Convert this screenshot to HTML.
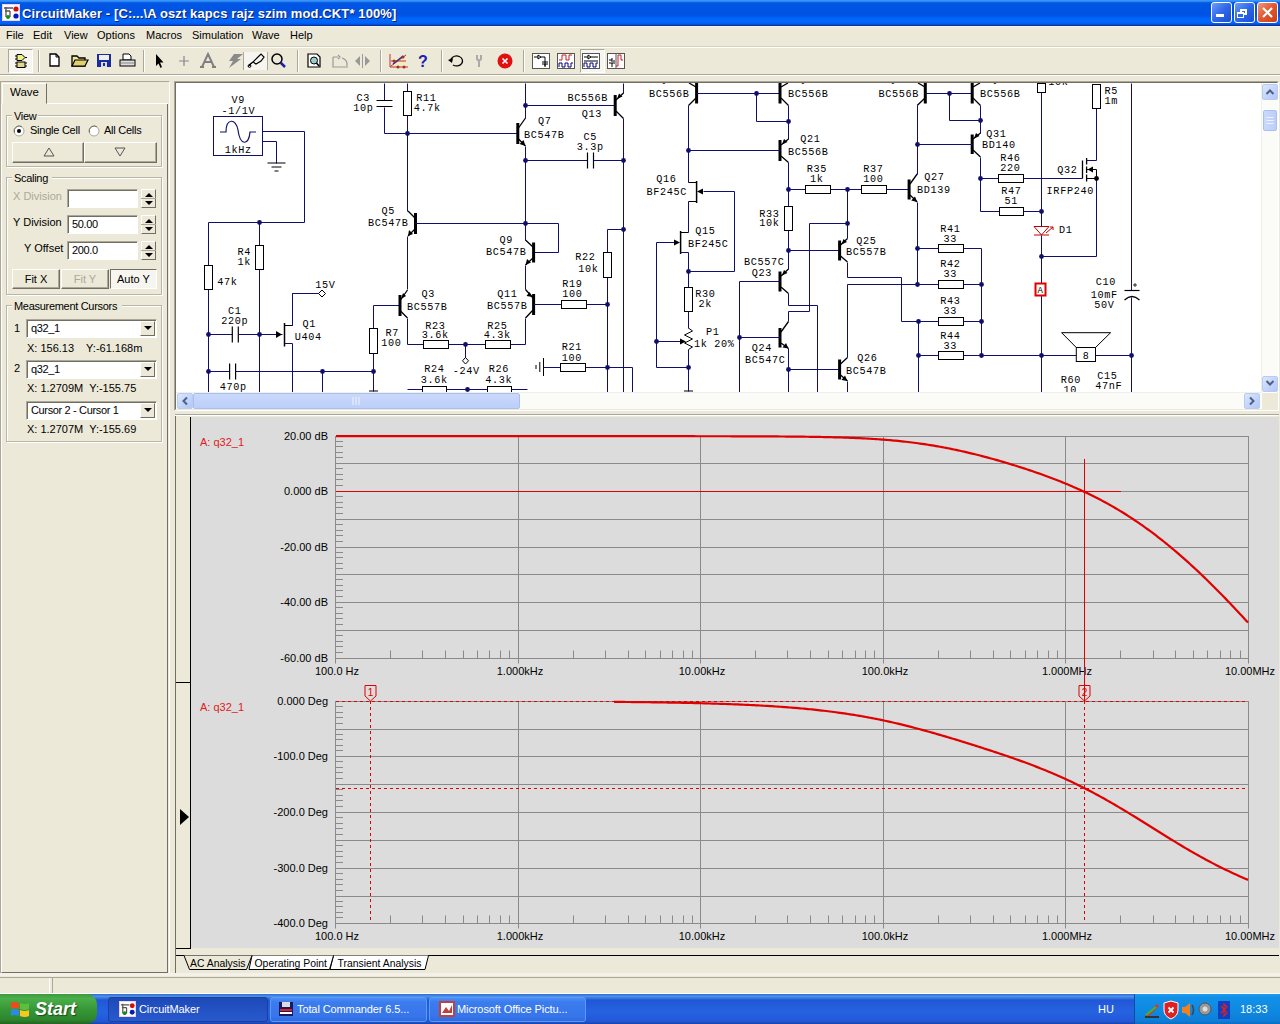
<!DOCTYPE html><html><head><meta charset="utf-8"><style>
*{margin:0;padding:0;box-sizing:border-box}
html,body{width:1280px;height:1024px;overflow:hidden;background:#ECE9D8;font-family:"Liberation Sans",sans-serif;font-size:11px;color:#000}
.a{position:absolute}
.t{position:absolute;white-space:pre;line-height:1}
</style></head><body><div class="a" style="left:0px;top:0px;width:1280px;height:26px;background:linear-gradient(#3D9DFF 0px,#2A84F4 1.5px,#0A60E0 2.5px,#0055E5 4px,#0053E2 15px,#005CF4 17px,#0068F5 19px,#0066FF 21px,#0064FC 23px,#0050D0 24.5px,#0A30A0 25.5px)"></div>
<svg class="a" style="left:2px;top:4px" width="18" height="17" viewBox="0 0 18 17">
<rect x="0" y="0" width="18" height="17" fill="#f4d0f4"/>
<rect x="1" y="1" width="16" height="15" fill="#fff"/>
<path d="M2 4H11M4 3V13M3 7H8M8 7V13" stroke="#555" stroke-width="1.3" fill="none"/>
<circle cx="14" cy="5" r="2.6" fill="#d01010"/><circle cx="14" cy="12" r="2.6" fill="#0020b0"/><circle cx="6" cy="13" r="2" fill="#109010"/>
</svg>
<div class="t" style="left:22px;top:7px;color:#fff;font-weight:bold;font-size:13px;letter-spacing:0.11px;text-shadow:1px 1px 0 #0a1e6e">CircuitMaker - [C:...\A oszt kapcs rajz szim mod.CKT* 100%]</div>
<div class="a" style="left:1211px;top:2px;width:21px;height:21px;background:linear-gradient(135deg,#6E9CF8,#2E67E8 50%,#1A4FD0);border:1px solid #fff;border-radius:3px"></div>
<div class="a" style="left:1234px;top:2px;width:21px;height:21px;background:linear-gradient(135deg,#6E9CF8,#2E67E8 50%,#1A4FD0);border:1px solid #fff;border-radius:3px"></div>
<div class="a" style="left:1257px;top:2px;width:21px;height:21px;background:linear-gradient(135deg,#F09878,#E0562E 50%,#C8401C);border:1px solid #fff;border-radius:3px"></div>
<div class="a" style="left:1216px;top:14px;width:8px;height:3px;background:#fff"></div>
<div class="a" style="left:1240px;top:9px;width:7px;height:6px;border:2px solid #fff;border-top-width:2px"></div>
<div class="a" style="left:1237px;top:12px;width:7px;height:6px;border:1px solid #fff;border-top:2px solid #fff;background:#2E67E8"></div>
<svg class="a" style="left:1261px;top:6px" width="13" height="13"><path d="M2 2L11 11M11 2L2 11" stroke="#fff" stroke-width="2.2"/></svg>
<div class="a" style="left:0px;top:26px;width:1280px;height:20px;background:#ECE9D8;border-top:1px solid #F2F2F4"></div>
<div class="t" style="left:6px;top:30px;font-size:11px">File</div>
<div class="t" style="left:33px;top:30px;font-size:11px">Edit</div>
<div class="t" style="left:64px;top:30px;font-size:11px">View</div>
<div class="t" style="left:97px;top:30px;font-size:11px">Options</div>
<div class="t" style="left:146px;top:30px;font-size:11px">Macros</div>
<div class="t" style="left:192px;top:30px;font-size:11px">Simulation</div>
<div class="t" style="left:252px;top:30px;font-size:11px">Wave</div>
<div class="t" style="left:290px;top:30px;font-size:11px">Help</div>
<div class="a" style="left:0px;top:46px;width:1280px;height:1px;background:#D8D2BD"></div>
<div class="a" style="left:0px;top:47px;width:1280px;height:1px;background:#fff"></div>
<div class="a" style="left:0px;top:48px;width:1280px;height:26px;background:#ECE9D8"></div>
<div class="a" style="left:0px;top:74px;width:1280px;height:1px;background:#ACA899"></div>
<div class="a" style="left:0px;top:75px;width:1280px;height:1px;background:#fff"></div>
<div class="a" style="left:0px;top:76px;width:1280px;height:918px;background:#ECE9D8"></div>
<div class="a" style="left:8px;top:49px;width:25px;height:24px;background:#F6F5EF;border:1px solid;border-color:#ACA899 #fff #fff #ACA899"></div>
<svg class="a" style="left:13px;top:53px" width="16" height="16" viewBox="0 0 16 16">
<path d="M2 3H4M2 6H4M12 4.5H14" stroke="#000"/><path d="M4 1.5H9L12 4.5L9 7.5H4Z" fill="#f0f080" stroke="#000"/>
<path d="M2 10H4M2 13H4M12 10H14M12 13H14" stroke="#000"/><rect x="4" y="9" width="8" height="5.5" fill="#e0d890" stroke="#000"/>
</svg>
<div class="a" style="left:38px;top:50px;width:1px;height:22px;background:#ACA899"></div>
<div class="a" style="left:39px;top:50px;width:1px;height:22px;background:#fff"></div>
<div class="a" style="left:143px;top:50px;width:1px;height:22px;background:#ACA899"></div>
<div class="a" style="left:144px;top:50px;width:1px;height:22px;background:#fff"></div>
<svg class="a" style="left:48px;top:52px" width="90" height="18" viewBox="0 0 90 18">
<path d="M2 2H8L11 5V14H2Z" fill="#fff" stroke="#000" stroke-width="1.3"/><path d="M8 2V5H11" fill="none" stroke="#000"/>
<path d="M24 4H29L31 6H37V14H24Z" fill="#f0e890" stroke="#000" stroke-width="1.3"/><path d="M24 14L27 8H40L37 14Z" fill="#e0d070" stroke="#000" stroke-width="1.2"/>
<rect x="49" y="2" width="14" height="13" fill="#1a2aa0"/><rect x="51" y="3" width="10" height="5" fill="#eee"/><rect x="53" y="10" width="6" height="5" fill="#ddd"/><rect x="55" y="11" width="2" height="3" fill="#1a2aa0"/>
<path d="M75 2H81L83 4V8H75Z" fill="#fff" stroke="#000"/><rect x="72" y="8" width="15" height="6" fill="#ddd" stroke="#000"/><path d="M73 11H86" stroke="#888"/>
</svg>
<svg class="a" style="left:150px;top:52px" width="140" height="18" viewBox="0 0 140 18">
<path d="M6 2V14L8.5 11.5L10.5 16L12 15L10 10.5H13.5Z" fill="#000"/>
<path d="M34 4V14M29 9H39" stroke="#888" stroke-width="1.2"/>
<path d="M52 15L58 2L64 15M55 10H61M50 15H54M62 15H66" stroke="#808080" stroke-width="2" fill="none"/>
<path d="M84 2H93L87 7H91L79 16L83 9H79Z" fill="#8a8a8a"/>
<rect x="93.5" y="-3.5" width="24" height="23" fill="#F6F5EF" stroke="#ACA899"/>
<path d="M99 13L103 10M103 10L108 5L111 2L114 5L111 9L106 12Z" fill="none" stroke="#000" stroke-width="1.2"/><circle cx="99.5" cy="14" r="1.4" fill="none" stroke="#000"/><path d="M98 15L103 10" stroke="#000"/>
<circle cx="127" cy="7" r="5" fill="none" stroke="#000" stroke-width="1.5"/><path d="M130.5 10.5L135 15" stroke="#2020a0" stroke-width="2.5"/>
</svg>
<div class="a" style="left:297px;top:50px;width:1px;height:22px;background:#ACA899"></div>
<div class="a" style="left:298px;top:50px;width:1px;height:22px;background:#fff"></div>
<svg class="a" style="left:305px;top:52px" width="75" height="18" viewBox="0 0 75 18">
<path d="M3 2H12L15 5V15H3Z" fill="#fff" stroke="#000" stroke-width="1.2"/><circle cx="9" cy="8.5" r="3.5" fill="#9cc" stroke="#000"/><path d="M11.5 11L14 14" stroke="#000" stroke-width="1.5"/>
<path d="M28 5V15H43M28 5H33M33 3L35 5L33 7M37 6Q43 8 42 14" stroke="#999" fill="none" stroke-width="1.2"/>
<path d="M50 9L55 4V14Z" fill="#999"/><path d="M65 9L60 4V14Z" fill="#999"/><path d="M57.5 2V16" stroke="#999"/>
</svg>
<div class="a" style="left:380px;top:50px;width:1px;height:22px;background:#ACA899"></div>
<div class="a" style="left:381px;top:50px;width:1px;height:22px;background:#fff"></div>
<svg class="a" style="left:388px;top:52px" width="50" height="18" viewBox="0 0 50 18">
<rect x="4" y="6" width="14" height="9" fill="#f4f0b0" opacity="0.6"/>
<path d="M2 2V15H20M3 14L18 3M3 9L18 9M3 15" stroke="#c03030" stroke-width="1" fill="none"/>
<path d="M5 12L15 4" stroke="#3030a0" stroke-width="1.5"/>
<circle cx="6" cy="9" r="1.5" fill="#a03030"/><circle cx="15" cy="5" r="1.5" fill="#a03030"/><circle cx="10" cy="15" r="1.5" fill="#a03030"/><circle cx="16" cy="15" r="1.5" fill="#a03030"/>
<text x="30" y="15" font-family="Liberation Sans" font-weight="bold" font-size="16" fill="#1a20b0">?</text>
</svg>
<div class="a" style="left:441px;top:50px;width:1px;height:22px;background:#ACA899"></div>
<div class="a" style="left:442px;top:50px;width:1px;height:22px;background:#fff"></div>
<svg class="a" style="left:446px;top:52px" width="70" height="18" viewBox="0 0 70 18">
<path d="M5 7A6 5 0 1 1 7 13" fill="none" stroke="#000" stroke-width="1.3"/><path d="M2 8L7 6L6 11Z" fill="#000"/>
<path d="M31 3V7L33 9L35 7V3M33 9V15" stroke="#aaa" stroke-width="2" fill="none"/>
<circle cx="59" cy="9" r="7.5" fill="#e01010"/><path d="M56.5 6.5L61.5 11.5M61.5 6.5L56.5 11.5" stroke="#fff" stroke-width="1.6"/>
</svg>
<div class="a" style="left:523px;top:50px;width:1px;height:22px;background:#ACA899"></div>
<div class="a" style="left:524px;top:50px;width:1px;height:22px;background:#fff"></div>
<div class="a" style="left:580px;top:49px;width:25px;height:24px;background:#F6F5EF;border:1px solid;border-color:#ACA899 #fff #fff #ACA899"></div>
<svg class="a" style="left:531px;top:52px" width="100" height="18" viewBox="0 0 100 18">
<rect x="1.5" y="1.5" width="17" height="15" fill="#fff" stroke="#555"/><path d="M3 5H7M7 3V7L10 5Z M10 5H14V14M11 10H17M11 12H17M14 12V15" stroke="#000" fill="none"/>
<rect x="26.5" y="1.5" width="17" height="15" fill="#fff" stroke="#555"/><path d="M28 8H31V3H35V8H38V3H41" stroke="#c02020" fill="none"/><path d="M28 15V11H31V15H34V11H37V15H40V11H42" stroke="#000080" fill="none"/>
<rect x="51.5" y="1.5" width="17" height="15" fill="#fff" stroke="#555"/><path d="M53 5H57M57 3V7L60 5Z M60 5H67M53 9H67" stroke="#000" fill="none"/><path d="M53 15V11H56V15H59V11H62V15H65V11H67" stroke="#000080" fill="none"/>
<rect x="76.5" y="1.5" width="17" height="15" fill="#fff" stroke="#555"/><path d="M78 8H81M81 6V10M82 9H84M78 11H84M81 11V15" stroke="#000" fill="none"/><path d="M85 14H87V3H90V8H92" stroke="#c02020" fill="none"/><path d="M85 2V16" stroke="#555"/>
</svg>
<div class="a" style="left:0px;top:76px;width:175px;height:903px;background:#ECE9D8"></div>
<div class="a" style="left:0px;top:81px;width:170px;height:895px;border:1px solid;border-color:#ACA899 #fff #fff #ACA899"></div>
<div class="a" style="left:1px;top:103px;width:167px;height:870px;border:1px solid;border-color:#fff #716F64 #716F64 #fff;border-top-color:transparent"></div>
<div class="a" style="left:47px;top:103px;width:121px;height:1px;background:#fff"></div>
<div class="a" style="left:2px;top:83px;width:45px;height:21px;background:#ECE9D8;border:1px solid;border-color:#fff #716F64 transparent #fff"></div>
<div class="t" style="left:10px;top:87px;font-size:11.5px">Wave</div>
<div class="a" style="left:6px;top:115px;width:156px;height:52px;border:1px solid #B8B6A6;box-shadow:inset 1px 1px 0 #fff, 1px 1px 0 #fff"></div>
<div class="a" style="left:12px;top:109px;width:26px;height:12px;background:#ECE9D8"></div>
<div class="t" style="left:14px;top:111px;font-size:11px;letter-spacing:-0.3px">View</div>
<svg class="a" style="left:13px;top:125px" width="160" height="12"><circle cx="6" cy="6" r="5" fill="#fff" stroke="#ACA899"/><path d="M1.5 7.5A5 5 0 0 1 9 1.8" stroke="#716F64" fill="none"/><circle cx="6" cy="6" r="2" fill="#000"/><circle cx="81" cy="6" r="5" fill="#fff" stroke="#ACA899"/><path d="M76.5 7.5A5 5 0 0 1 84 1.8" stroke="#716F64" fill="none"/></svg>
<div class="t" style="left:30px;top:125px;font-size:11px;letter-spacing:-0.25px">Single Cell</div>
<div class="t" style="left:104px;top:125px;font-size:11px;letter-spacing:-0.25px">All Cells</div>
<div class="a" style="left:12px;top:142px;width:72px;height:21px;background:#ECE9D8;border:1px solid;border-color:#fff #716F64 #716F64 #fff;box-shadow:inset -1px -1px 0 #ACA899;"></div>
<div class="a" style="left:84px;top:142px;width:73px;height:21px;background:#ECE9D8;border:1px solid;border-color:#fff #716F64 #716F64 #fff;box-shadow:inset -1px -1px 0 #ACA899;"></div>
<svg class="a" style="left:40px;top:146px" width="100" height="12"><path d="M4 10L9 2L14 10Z" fill="none" stroke="#555"/><path d="M75 2L80 10L85 2Z" fill="none" stroke="#555"/></svg>
<div class="a" style="left:6px;top:177px;width:156px;height:118px;border:1px solid #B8B6A6;box-shadow:inset 1px 1px 0 #fff, 1px 1px 0 #fff"></div>
<div class="a" style="left:12px;top:171px;width:40px;height:12px;background:#ECE9D8"></div>
<div class="t" style="left:14px;top:173px;font-size:11px;letter-spacing:-0.3px">Scaling</div>
<div class="t" style="left:13px;top:191px;color:#ACA899;font-size:11px">X Division</div>
<div class="t" style="left:13px;top:217px;font-size:11px">Y Division</div>
<div class="t" style="left:24px;top:243px;font-size:11px">Y Offset</div>
<div class="a" style="left:67px;top:189px;width:71px;height:19px;background:#fff;border:1px solid;border-color:#ACA899 #fff #fff #ACA899;box-shadow:inset 1px 1px 0 #716F64"></div>
<div class="a" style="left:141px;top:189px;width:15px;height:19px;background:#ECE9D8;border:1px solid;border-color:#fff #716F64 #716F64 #fff"></div>
<div class="a" style="left:141px;top:198px;width:15px;height:1px;background:#ACA899"></div>
<svg class="a" style="left:144px;top:191px" width="10" height="16"><path d="M1 6L5 2L9 6Z M1 10L9 10L5 14Z" fill="#000"/></svg>
<div class="a" style="left:67px;top:215px;width:71px;height:19px;background:#fff;border:1px solid;border-color:#ACA899 #fff #fff #ACA899;box-shadow:inset 1px 1px 0 #716F64"></div>
<div class="t" style="left:72px;top:219px;font-size:11px;letter-spacing:-0.35px">50.00</div>
<div class="a" style="left:141px;top:215px;width:15px;height:19px;background:#ECE9D8;border:1px solid;border-color:#fff #716F64 #716F64 #fff"></div>
<div class="a" style="left:141px;top:224px;width:15px;height:1px;background:#ACA899"></div>
<svg class="a" style="left:144px;top:217px" width="10" height="16"><path d="M1 6L5 2L9 6Z M1 10L9 10L5 14Z" fill="#000"/></svg>
<div class="a" style="left:67px;top:241px;width:71px;height:19px;background:#fff;border:1px solid;border-color:#ACA899 #fff #fff #ACA899;box-shadow:inset 1px 1px 0 #716F64"></div>
<div class="t" style="left:72px;top:245px;font-size:11px;letter-spacing:-0.35px">200.0</div>
<div class="a" style="left:141px;top:241px;width:15px;height:19px;background:#ECE9D8;border:1px solid;border-color:#fff #716F64 #716F64 #fff"></div>
<div class="a" style="left:141px;top:250px;width:15px;height:1px;background:#ACA899"></div>
<svg class="a" style="left:144px;top:243px" width="10" height="16"><path d="M1 6L5 2L9 6Z M1 10L9 10L5 14Z" fill="#000"/></svg>
<div class="a" style="left:12px;top:269px;width:48px;height:20px;background:#ECE9D8;border:1px solid;border-color:#fff #716F64 #716F64 #fff;box-shadow:inset -1px -1px 0 #ACA899;"></div>
<div class="t" style="left:12px;top:269px;width:48px;height:20px;display:flex;align-items:center;justify-content:center;">Fit X</div>
<div class="a" style="left:61px;top:269px;width:48px;height:20px;background:#ECE9D8;border:1px solid;border-color:#fff #716F64 #716F64 #fff;box-shadow:inset -1px -1px 0 #ACA899;"></div>
<div class="t" style="left:61px;top:269px;width:48px;height:20px;display:flex;align-items:center;justify-content:center;color:#ACA899">Fit Y</div>
<div class="a" style="left:110px;top:269px;width:47px;height:20px;background:#F6F5EF;border:1px solid;border-color:#716F64 #fff #fff #716F64"></div>
<div class="t" style="left:117px;top:274px;font-size:11px">Auto Y</div>
<div class="a" style="left:6px;top:305px;width:156px;height:137px;border:1px solid #B8B6A6;box-shadow:inset 1px 1px 0 #fff, 1px 1px 0 #fff"></div>
<div class="a" style="left:12px;top:299px;width:110px;height:12px;background:#ECE9D8"></div>
<div class="t" style="left:14px;top:301px;font-size:11px;letter-spacing:-0.3px">Measurement Cursors</div>
<div class="t" style="left:14px;top:323px;font-size:11px">1</div>
<div class="t" style="left:14px;top:363px;font-size:11px">2</div>
<div class="a" style="left:26px;top:319px;width:131px;height:19px;background:#fff;border:1px solid;border-color:#ACA899 #fff #fff #ACA899;box-shadow:inset 1px 1px 0 #716F64"></div>
<div class="t" style="left:31px;top:323px;font-size:11px;letter-spacing:-0.35px">q32_1</div>
<div class="a" style="left:140px;top:321px;width:15px;height:15px;background:#ECE9D8;border:1px solid;border-color:#fff #716F64 #716F64 #fff"></div>
<svg class="a" style="left:144px;top:326px" width="8" height="5"><path d="M0 0H8L4 4Z" fill="#000"/></svg>
<div class="a" style="left:26px;top:360px;width:131px;height:19px;background:#fff;border:1px solid;border-color:#ACA899 #fff #fff #ACA899;box-shadow:inset 1px 1px 0 #716F64"></div>
<div class="t" style="left:31px;top:364px;font-size:11px;letter-spacing:-0.35px">q32_1</div>
<div class="a" style="left:140px;top:362px;width:15px;height:15px;background:#ECE9D8;border:1px solid;border-color:#fff #716F64 #716F64 #fff"></div>
<svg class="a" style="left:144px;top:367px" width="8" height="5"><path d="M0 0H8L4 4Z" fill="#000"/></svg>
<div class="a" style="left:26px;top:401px;width:131px;height:19px;background:#fff;border:1px solid;border-color:#ACA899 #fff #fff #ACA899;box-shadow:inset 1px 1px 0 #716F64"></div>
<div class="t" style="left:31px;top:405px;font-size:11px;letter-spacing:-0.35px">Cursor 2 - Cursor 1</div>
<div class="a" style="left:140px;top:403px;width:15px;height:15px;background:#ECE9D8;border:1px solid;border-color:#fff #716F64 #716F64 #fff"></div>
<svg class="a" style="left:144px;top:408px" width="8" height="5"><path d="M0 0H8L4 4Z" fill="#000"/></svg>
<div class="t" style="left:27px;top:343px;font-size:11px">X: 156.13    Y:-61.168m</div>
<div class="t" style="left:27px;top:383px;font-size:11px">X: 1.2709M  Y:-155.75</div>
<div class="t" style="left:27px;top:424px;font-size:11px">X: 1.2707M  Y:-155.69</div>
<div class="a" style="left:174px;top:81px;width:1105px;height:330px;border:1px solid;border-color:#ACA899 #fff #fff #ACA899"></div>
<div class="a" style="left:175px;top:82px;width:1103px;height:328px;background:#fff;border:1px solid;border-color:#716F64 #ECE9D8 #ECE9D8 #716F64"></div>
<svg class="a" style="left:0;top:0" width="1280" height="1024" viewBox="0 0 1280 1024"><defs><clipPath id="sc"><rect x="176" y="83" width="1085" height="309"/></clipPath></defs><g clip-path="url(#sc)" font-family="Liberation Mono" font-size="10.2" letter-spacing="0.65" fill="#000"><rect x="213.5" y="116.5" width="49" height="39" fill="none" stroke="#10106a"/><path d="M220 132H226C226 118 236 118 238 130C240 146 249 146 250 132H256" stroke="#10106a" fill="none" stroke-width="1.2"/><text x="238.3" y="102.5" text-anchor="middle">V9</text><text x="238.3" y="113.5" text-anchor="middle">-1/1V</text><text x="238.3" y="152.5" text-anchor="middle">1kHz</text><path d="M262.5 131.5 L304.5 131.5 L304.5 222.5 L208.5 222.5 L208.5 392.5" stroke="#10106a" fill="none"/><circle cx="259.5" cy="222.5" r="2.4" fill="#10106a"/><path d="M262.5 141.5 L276.5 141.5 L276.5 163.5" stroke="#10106a" fill="none"/><path d="M267.5 163H285.5M271.5 167H281.5M274.5 171H278.5" stroke="#000"/><path d="M384.5 83.5 L384.5 100.5" stroke="#10106a" fill="none"/><path d="M376.5 100.5H392.5M376.5 106.5H392.5" stroke="#000" stroke-width="1.2"/><path d="M384.5 107.5 L384.5 133.5 L517.5 133.5" stroke="#10106a" fill="none"/><text x="363.3" y="100.5" text-anchor="middle">C3</text><text x="363.3" y="110.5" text-anchor="middle">10p</text><path d="M407.5 83.5 L407.5 91.5" stroke="#10106a" fill="none"/><rect x="403.5" y="91.5" width="8" height="24.0" fill="#fff" stroke="#000"/><path d="M407.5 115.5 L407.5 211.5" stroke="#10106a" fill="none"/><text x="426.3" y="100.5" text-anchor="middle">R11</text><text x="427.3" y="110.5" text-anchor="middle">4.7k</text><circle cx="407.5" cy="133.5" r="2.4" fill="#10106a"/><path d="M259.5 222.5 L259.5 245.5" stroke="#10106a" fill="none"/><rect x="255.5" y="245.5" width="8" height="24.0" fill="#fff" stroke="#000"/><path d="M259.5 269.5 L259.5 392.5" stroke="#10106a" fill="none"/><text x="244.3" y="254.5" text-anchor="middle">R4</text><text x="244.3" y="264.5" text-anchor="middle">1k</text><rect x="204.5" y="265.5" width="8" height="24.0" fill="#fff" stroke="#000"/><text x="227.3" y="284.5" text-anchor="middle">47k</text><path d="M208.5 334.5 L232.5 334.5" stroke="#10106a" fill="none"/><path d="M232.3 326.5V342.5M238.3 326.5V342.5" stroke="#000" stroke-width="1.2"/><path d="M238.5 334.5 L282.5 334.5" stroke="#10106a" fill="none"/><text x="234.8" y="313.5" text-anchor="middle">C1</text><text x="234.8" y="323.5" text-anchor="middle">220p</text><circle cx="208.5" cy="334.5" r="2.4" fill="#10106a"/><circle cx="259.5" cy="334.5" r="2.4" fill="#10106a"/><path d="M282 334.5L276 331V338Z" fill="#000"/><path d="M284.5 323V346.5" stroke="#000" stroke-width="1.5"/><path d="M284.5 325.5 L292.5 325.5 L292.5 293.5 L320.5 293.5" stroke="#000" fill="none"/><path d="M292.5 325.5V300" stroke="#10106a"/><path d="M292.5 300V293.5H320" stroke="#10106a" fill="none"/><path d="M322 290L325.5 293.5L322 297L318.5 293.5Z" fill="#fff" stroke="#000"/><path d="M284.5 343.5 L292.5 343.5 L292.5 392.5" stroke="#10106a" fill="none"/><text x="325.3" y="287.5" text-anchor="middle">15V</text><text x="309.3" y="326.5" text-anchor="middle">Q1</text><text x="308.3" y="339.5" text-anchor="middle">U404</text><path d="M208.5 371.5 L229.5 371.5" stroke="#10106a" fill="none"/><path d="M229.6 363.5V379.5M235.6 363.5V379.5" stroke="#000" stroke-width="1.2"/><path d="M235.5 371.5 L373.5 371.5" stroke="#10106a" fill="none"/><text x="233.3" y="389.5" text-anchor="middle">470p</text><circle cx="208.5" cy="371.5" r="2.4" fill="#10106a"/><circle cx="322.5" cy="371.5" r="2.4" fill="#10106a"/><circle cx="373.5" cy="371.5" r="2.4" fill="#10106a"/><path d="M322.5 371.5 L322.5 392.5" stroke="#10106a" fill="none"/><path d="M373.5 305.5 L373.5 328.5" stroke="#10106a" fill="none"/><rect x="369.5" y="328.5" width="8" height="25.0" fill="#fff" stroke="#000"/><path d="M373.5 353.5 L373.5 391.5" stroke="#10106a" fill="none"/><path d="M369 391H378" stroke="#000"/><path d="M373.5 305.5 L400.5 305.5" stroke="#10106a" fill="none"/><text x="392.3" y="335.5" text-anchor="middle">R7</text><text x="391.3" y="345.5" text-anchor="middle">100</text><path d="M415.5 213V234" stroke="#000" stroke-width="3"/><path d="M415 218L408 211M415 229L408 236" stroke="#000" stroke-width="1.3"/><path d="M408 236L409 230L413 234Z" fill="#000"/><path d="M415.5 223.5 L558.5 223.5 L558.5 252.5 L533.5 252.5" stroke="#10106a" fill="none"/><text x="388.3" y="213.5" text-anchor="middle">Q5</text><text x="388.3" y="225.5" text-anchor="middle">BC547B</text><path d="M407.5 236.5 L407.5 289.5" stroke="#10106a" fill="none"/><path d="M400 295V316" stroke="#000" stroke-width="3"/><path d="M400.5 300L407.5 290M400.5 311L407.5 318" stroke="#000" stroke-width="1.3"/><path d="M401 299L403 293L406 296Z" fill="#000"/><path d="M407.5 318.5 L407.5 344.5 L423.5 344.5" stroke="#10106a" fill="none"/><text x="428.3" y="296.5" text-anchor="middle">Q3</text><text x="427.3" y="309.5" text-anchor="middle">BC557B</text><rect x="423.5" y="340.5" width="25.0" height="8" fill="#fff" stroke="#000"/><path d="M448.5 344.5 L485.5 344.5" stroke="#10106a" fill="none"/><rect x="485.5" y="340.5" width="25.0" height="8" fill="#fff" stroke="#000"/><path d="M510.5 344.5 L525.5 344.5 L525.5 318.5" stroke="#10106a" fill="none"/><text x="435.3" y="328.5" text-anchor="middle">R23</text><text x="435.3" y="338.0" text-anchor="middle">3.6k</text><text x="497.3" y="328.5" text-anchor="middle">R25</text><text x="497.3" y="338.0" text-anchor="middle">4.3k</text><circle cx="465.5" cy="344.5" r="2.4" fill="#10106a"/><path d="M465.5 344.5 L465.5 358.5" stroke="#10106a" fill="none"/><path d="M465.5 357.5L468.5 360.8L465.5 364L462.5 360.8Z" fill="#fff" stroke="#000"/><text x="466.3" y="374.0" text-anchor="middle">-24V</text><text x="434.3" y="372.0" text-anchor="middle">R24</text><text x="434.3" y="382.5" text-anchor="middle">3.6k</text><text x="498.8" y="372.0" text-anchor="middle">R26</text><text x="498.8" y="382.5" text-anchor="middle">4.3k</text><path d="M407.5 389.5 L422.5 389.5" stroke="#10106a" fill="none"/><rect x="422.5" y="386.5" width="24.0" height="8" fill="#fff" stroke="#000"/><path d="M446.5 389.5 L487.5 389.5" stroke="#10106a" fill="none"/><rect x="487.5" y="386.5" width="24.0" height="8" fill="#fff" stroke="#000"/><path d="M511.5 389.5 L527.5 389.5" stroke="#10106a" fill="none"/><circle cx="467.5" cy="389.5" r="2.4" fill="#10106a"/><path d="M517.8 123V144" stroke="#000" stroke-width="3"/><path d="M518.5 128L525.5 118M518.5 139L525.5 146" stroke="#000" stroke-width="1.3"/><path d="M525.5 146L519.5 144L523.5 140Z" fill="#000"/><path d="M525.5 83.5 L525.5 118.5" stroke="#10106a" fill="none"/><path d="M525.5 146.5 L525.5 240.5" stroke="#10106a" fill="none"/><path d="M525.5 265.5 L525.5 289.5" stroke="#10106a" fill="none"/><circle cx="525.5" cy="105.5" r="2.4" fill="#10106a"/><circle cx="525.5" cy="160.5" r="2.4" fill="#10106a"/><circle cx="525.5" cy="223.5" r="2.4" fill="#10106a"/><text x="544.8" y="124.0" text-anchor="middle">Q7</text><text x="544.3" y="137.5" text-anchor="middle">BC547B</text><path d="M525.5 105.5 L615.5 105.5" stroke="#10106a" fill="none"/><path d="M525.5 160.5 L587.5 160.5" stroke="#10106a" fill="none"/><path d="M587.5 152.5V168.5M593.5 152.5V168.5" stroke="#000" stroke-width="1.2"/><path d="M593.5 160.5 L623.5 160.5" stroke="#10106a" fill="none"/><text x="590.3" y="139.5" text-anchor="middle">C5</text><text x="590.3" y="149.5" text-anchor="middle">3.3p</text><circle cx="623.5" cy="160.5" r="2.4" fill="#10106a"/><path d="M615.2 95V116" stroke="#000" stroke-width="3"/><path d="M616 100L623.5 93M616 111L623.5 118.5" stroke="#000" stroke-width="1.3"/><path d="M617 99L619 93.5L622.5 96.5Z" fill="#000"/><path d="M623.5 83.5 L623.5 93.5" stroke="#10106a" fill="none"/><path d="M623.5 118.5 L623.5 392.5" stroke="#10106a" fill="none"/><text x="587.8" y="100.5" text-anchor="middle">BC556B</text><text x="591.8" y="116.5" text-anchor="middle">Q13</text><circle cx="623.5" cy="229.5" r="2.4" fill="#10106a"/><path d="M623.5 229.5 L607.5 229.5 L607.5 392.5" stroke="#10106a" fill="none"/><path d="M533.6 242.5V262.5" stroke="#000" stroke-width="3"/><path d="M533 247L525.5 240M533 258L525.5 265" stroke="#000" stroke-width="1.3"/><path d="M525.5 265L527 259L531 262.5Z" fill="#000"/><text x="506.3" y="242.5" text-anchor="middle">Q9</text><text x="506.3" y="254.5" text-anchor="middle">BC547B</text><path d="M533.6 294V315" stroke="#000" stroke-width="3"/><path d="M533 298L525.5 289.5M533 310L525.5 318" stroke="#000" stroke-width="1.3"/><path d="M532.5 297L526.5 296L529.5 292Z" fill="#000"/><text x="507.3" y="297.0" text-anchor="middle">Q11</text><text x="507.3" y="308.5" text-anchor="middle">BC557B</text><path d="M533.5 304.5 L561.5 304.5" stroke="#10106a" fill="none"/><rect x="561.5" y="300.5" width="25.0" height="8" fill="#fff" stroke="#000"/><path d="M586.5 304.5 L607.5 304.5" stroke="#10106a" fill="none"/><circle cx="607.5" cy="304.5" r="2.4" fill="#10106a"/><text x="572.3" y="287.0" text-anchor="middle">R19</text><text x="572.3" y="297.0" text-anchor="middle">100</text><rect x="603.5" y="252.5" width="8" height="25.0" fill="#fff" stroke="#000"/><text x="585.3" y="259.5" text-anchor="middle">R22</text><text x="588.3" y="271.5" text-anchor="middle">10k</text><path d="M543.5 358V376M539.8 362V372M536 365V369" stroke="#000"/><path d="M543.5 367.5 L560.5 367.5" stroke="#10106a" fill="none"/><rect x="560.5" y="363.5" width="25.0" height="8" fill="#fff" stroke="#000"/><path d="M585.5 367.5 L632.5 367.5 L632.5 392.5" stroke="#10106a" fill="none"/><circle cx="607.5" cy="367.5" r="2.4" fill="#10106a"/><text x="571.8" y="350.0" text-anchor="middle">R21</text><text x="571.8" y="360.5" text-anchor="middle">100</text><path d="M696.6 83V103.5" stroke="#000" stroke-width="3"/><path d="M696 98L688.5 105.5M696 87L689 83" stroke="#000" stroke-width="1.3"/><text x="669.3" y="96.5" text-anchor="middle">BC556B</text><path d="M696.5 93.5 L780.5 93.5" stroke="#10106a" fill="none"/><circle cx="756.5" cy="93.5" r="2.4" fill="#10106a"/><path d="M756.5 93.5 L756.5 121.5 L788.5 121.5" stroke="#10106a" fill="none"/><circle cx="788.5" cy="121.5" r="2.4" fill="#10106a"/><path d="M780 83V103.5" stroke="#000" stroke-width="3"/><path d="M781 98L788.5 105.5M781 87L788 83" stroke="#000" stroke-width="1.3"/><text x="808.3" y="96.5" text-anchor="middle">BC556B</text><path d="M788.5 105.5 L788.5 139.5" stroke="#10106a" fill="none"/><path d="M688.5 105.5 L688.5 182.5" stroke="#10106a" fill="none"/><path d="M780 140V161" stroke="#000" stroke-width="3"/><path d="M781 145L788.5 139M781 156L788.5 162.5" stroke="#000" stroke-width="1.3"/><path d="M782 144.5L784 139L787.5 142Z" fill="#000"/><path d="M688.5 150.5 L780.5 150.5" stroke="#10106a" fill="none"/><circle cx="688.5" cy="150.5" r="2.4" fill="#10106a"/><text x="810.3" y="141.5" text-anchor="middle">Q21</text><text x="808.3" y="154.5" text-anchor="middle">BC556B</text><path d="M788.5 162.5 L788.5 206.5" stroke="#10106a" fill="none"/><circle cx="788.5" cy="189.5" r="2.4" fill="#10106a"/><path d="M788.5 189.5 L805.5 189.5" stroke="#10106a" fill="none"/><rect x="805.5" y="185.5" width="25.0" height="8" fill="#fff" stroke="#000"/><path d="M830.5 189.5 L861.5 189.5" stroke="#10106a" fill="none"/><circle cx="847.5" cy="189.5" r="2.4" fill="#10106a"/><text x="816.8" y="171.5" text-anchor="middle">R35</text><text x="816.8" y="182.0" text-anchor="middle">1k</text><rect x="784.5" y="206.5" width="8" height="24.0" fill="#fff" stroke="#000"/><text x="769.3" y="217.0" text-anchor="middle">R33</text><text x="769.3" y="226.0" text-anchor="middle">10k</text><path d="M788.5 230.5 L788.5 250.5" stroke="#10106a" fill="none"/><circle cx="847.5" cy="223.5" r="2.4" fill="#10106a"/><path d="M847.5 189.5 L847.5 238.5" stroke="#10106a" fill="none"/><path d="M847.5 223.5 L809.5 223.5 L809.5 311.5 L788.5 311.5 L788.5 321.5" stroke="#10106a" fill="none"/><path d="M696.6 181V203" stroke="#000" stroke-width="1.5"/><path d="M688.5 182.5 L696.5 182.5" stroke="#000" fill="none"/><path d="M688.5 201.5 L696.5 201.5" stroke="#000" fill="none"/><path d="M697 191.5L703 188.5V194.5Z" fill="#000"/><path d="M703.5 191.5 L734.5 191.5 L734.5 271.5 L688.5 271.5" stroke="#10106a" fill="none"/><text x="666.3" y="182.0" text-anchor="middle">Q16</text><text x="666.8" y="194.5" text-anchor="middle">BF245C</text><path d="M688.5 201.5 L688.5 232.5" stroke="#10106a" fill="none"/><path d="M680.6 231V254" stroke="#000" stroke-width="1.5"/><path d="M680.5 232.5 L688.5 232.5" stroke="#000" fill="none"/><path d="M680.5 252.5 L688.5 252.5 L688.5 287.5" stroke="#10106a" fill="none"/><path d="M680 242.5L674 239.5V245.5Z" fill="#000"/><path d="M656.5 242.5 L674.5 242.5" stroke="#10106a" fill="none"/><path d="M656.5 242.5 L656.5 367.5 L688.5 367.5" stroke="#10106a" fill="none"/><text x="705.3" y="233.5" text-anchor="middle">Q15</text><text x="708.3" y="247.0" text-anchor="middle">BF245C</text><circle cx="688.5" cy="271.5" r="2.4" fill="#10106a"/><rect x="684.5" y="287.5" width="8" height="24.0" fill="#fff" stroke="#000"/><text x="705.3" y="296.5" text-anchor="middle">R30</text><text x="705.3" y="306.5" text-anchor="middle">2k</text><path d="M688.5 311.5 L688.5 328.5" stroke="#10106a" fill="none"/><path d="M688.5 328L692.5 331L684.5 335L692.5 339L684.5 343L692.5 347L688.5 349.5" stroke="#000" fill="none"/><path d="M656.5 341.5 L684.5 341.5" stroke="#10106a" fill="none"/><path d="M686 341.5L680 338.5V344.5Z" fill="#000"/><circle cx="656.5" cy="341.5" r="2.4" fill="#10106a"/><path d="M688.5 349.5 L688.5 391.5" stroke="#10106a" fill="none"/><circle cx="688.5" cy="367.5" r="2.4" fill="#10106a"/><path d="M684 391H693" stroke="#000"/><text x="712.8" y="335.0" text-anchor="middle">P1</text><text x="714.3" y="346.5" text-anchor="middle">1k 20%</text><path d="M780 271.5V291.5" stroke="#000" stroke-width="3"/><path d="M781 276L788.5 269M781 287L788.5 293.5" stroke="#000" stroke-width="1.3"/><path d="M782 275.5L784 270L787.5 273Z" fill="#000"/><path d="M739.5 281.5 L780.5 281.5" stroke="#10106a" fill="none"/><path d="M739.5 281.5 L739.5 392.5" stroke="#10106a" fill="none"/><circle cx="739.5" cy="337.5" r="2.4" fill="#10106a"/><path d="M788.5 250.5 L788.5 269.5" stroke="#10106a" fill="none"/><circle cx="788.5" cy="250.5" r="2.4" fill="#10106a"/><path d="M788.5 250.5 L839.5 250.5" stroke="#10106a" fill="none"/><path d="M788.5 293.5 L788.5 305.5 L817.5 305.5 L817.5 392.5" stroke="#10106a" fill="none"/><text x="764.3" y="265.0" text-anchor="middle">BC557C</text><text x="761.8" y="276.0" text-anchor="middle">Q23</text><path d="M780 328V347.5" stroke="#000" stroke-width="3"/><path d="M781 332L788.5 321.5M781 343L788.5 348.5" stroke="#000" stroke-width="1.3"/><path d="M788.5 348.5L782.5 347.5L786 343Z" fill="#000"/><path d="M739.5 337.5 L780.5 337.5" stroke="#10106a" fill="none"/><path d="M788.5 348.5 L788.5 392.5" stroke="#10106a" fill="none"/><circle cx="788.5" cy="369.5" r="2.4" fill="#10106a"/><path d="M788.5 369.5 L839.5 369.5" stroke="#10106a" fill="none"/><text x="761.8" y="351.0" text-anchor="middle">Q24</text><text x="765.3" y="362.5" text-anchor="middle">BC547C</text><path d="M839.6 240.5V260.5" stroke="#000" stroke-width="3"/><path d="M840.5 245L847.5 238.5M840.5 256L847.5 262" stroke="#000" stroke-width="1.3"/><path d="M841.5 244.5L843.5 239L847 242Z" fill="#000"/><path d="M847.5 262.5 L847.5 277.5 L901.5 277.5 L901.5 321.5 L918.5 321.5" stroke="#10106a" fill="none"/><path d="M847.5 284.5 L917.5 284.5" stroke="#10106a" fill="none"/><path d="M847.5 284.5 L847.5 357.5" stroke="#10106a" fill="none"/><text x="866.3" y="243.5" text-anchor="middle">Q25</text><text x="866.3" y="254.5" text-anchor="middle">BC557B</text><path d="M839.6 359.5V379.5" stroke="#000" stroke-width="3"/><path d="M840.5 364L847.5 357.5M840.5 375L847.5 381" stroke="#000" stroke-width="1.3"/><path d="M847.5 381L841.5 380L845 375.5Z" fill="#000"/><path d="M847.5 381.5 L847.5 392.5" stroke="#10106a" fill="none"/><text x="867.3" y="360.5" text-anchor="middle">Q26</text><text x="866.3" y="373.5" text-anchor="middle">BC547B</text><rect x="861.5" y="185.5" width="25.0" height="8" fill="#fff" stroke="#000"/><path d="M886.5 189.5 L909.5 189.5" stroke="#10106a" fill="none"/><text x="873.3" y="171.5" text-anchor="middle">R37</text><text x="873.3" y="182.0" text-anchor="middle">100</text><path d="M909.1 179.5V199.5" stroke="#000" stroke-width="3"/><path d="M910 184L917.2 174M910 195L917.2 202" stroke="#000" stroke-width="1.3"/><path d="M917.2 202L911.2 200.5L915 196.5Z" fill="#000"/><text x="934.3" y="180.0" text-anchor="middle">Q27</text><text x="933.8" y="193.0" text-anchor="middle">BD139</text><path d="M917.5 202.5 L917.5 284.5" stroke="#10106a" fill="none"/><circle cx="917.5" cy="248.5" r="2.4" fill="#10106a"/><circle cx="917.5" cy="284.5" r="2.4" fill="#10106a"/><path d="M925.3 83V103.5" stroke="#000" stroke-width="3"/><path d="M925 98L917.2 105.5M925 87L918 83" stroke="#000" stroke-width="1.3"/><text x="898.8" y="96.5" text-anchor="middle">BC556B</text><path d="M925.5 93.5 L972.5 93.5" stroke="#10106a" fill="none"/><circle cx="949.5" cy="93.5" r="2.4" fill="#10106a"/><path d="M949.5 93.5 L949.5 120.5 L980.5 120.5" stroke="#10106a" fill="none"/><circle cx="980.5" cy="120.5" r="2.4" fill="#10106a"/><path d="M972.2 83V103.5" stroke="#000" stroke-width="3"/><path d="M973 98L980.5 105.5M973 87L980 83" stroke="#000" stroke-width="1.3"/><text x="1000.3" y="96.5" text-anchor="middle">BC556B</text><path d="M980.5 105.5 L980.5 133.5" stroke="#10106a" fill="none"/><path d="M917.5 105.5 L917.5 174.5" stroke="#10106a" fill="none"/><path d="M972.2 134.5V154" stroke="#000" stroke-width="3"/><path d="M973 139L980.5 133M973 150L980.5 157" stroke="#000" stroke-width="1.3"/><path d="M974 138.5L976 133L979.5 136Z" fill="#000"/><path d="M917.5 144.5 L972.5 144.5" stroke="#10106a" fill="none"/><circle cx="917.5" cy="144.5" r="2.4" fill="#10106a"/><text x="996.3" y="136.5" text-anchor="middle">Q31</text><text x="998.8" y="148.0" text-anchor="middle">BD140</text><path d="M980.5 157.5 L980.5 211.5 L999.5 211.5" stroke="#10106a" fill="none"/><circle cx="980.5" cy="178.5" r="2.4" fill="#10106a"/><path d="M980.5 178.5 L998.5 178.5" stroke="#10106a" fill="none"/><rect x="998.5" y="174.5" width="25.0" height="8" fill="#fff" stroke="#000"/><path d="M1023.5 178.5 L1082.5 178.5" stroke="#10106a" fill="none"/><text x="1010.3" y="161.0" text-anchor="middle">R46</text><text x="1010.3" y="170.5" text-anchor="middle">220</text><rect x="999.5" y="207.5" width="24.0" height="8" fill="#fff" stroke="#000"/><path d="M1023.5 211.5 L1041.5 211.5" stroke="#10106a" fill="none"/><circle cx="1041.5" cy="211.5" r="2.4" fill="#10106a"/><text x="1011.3" y="194.0" text-anchor="middle">R47</text><text x="1011.3" y="204.0" text-anchor="middle">51</text><rect x="938.5" y="244.5" width="25.0" height="8" fill="#fff" stroke="#000"/><path d="M917.5 248.5 L938.5 248.5" stroke="#10106a" fill="none"/><path d="M963.5 248.5 L981.5 248.5 L981.5 355.5" stroke="#10106a" fill="none"/><text x="950.3" y="231.5" text-anchor="middle">R41</text><text x="950.3" y="241.5" text-anchor="middle">33</text><rect x="938.5" y="280.5" width="25.0" height="8" fill="#fff" stroke="#000"/><path d="M917.5 284.5 L938.5 284.5" stroke="#10106a" fill="none"/><path d="M963.5 284.5 L981.5 284.5" stroke="#10106a" fill="none"/><circle cx="981.5" cy="284.5" r="2.4" fill="#10106a"/><text x="950.3" y="267.0" text-anchor="middle">R42</text><text x="950.3" y="277.0" text-anchor="middle">33</text><rect x="938.5" y="317.5" width="25.0" height="8" fill="#fff" stroke="#000"/><path d="M918.5 321.5 L938.5 321.5" stroke="#10106a" fill="none"/><path d="M963.5 321.5 L981.5 321.5" stroke="#10106a" fill="none"/><circle cx="981.5" cy="321.5" r="2.4" fill="#10106a"/><circle cx="918.5" cy="321.5" r="2.4" fill="#10106a"/><text x="950.3" y="304.0" text-anchor="middle">R43</text><text x="950.3" y="314.0" text-anchor="middle">33</text><rect x="938.5" y="351.5" width="25.0" height="8" fill="#fff" stroke="#000"/><path d="M918.5 355.5 L938.5 355.5" stroke="#10106a" fill="none"/><path d="M963.5 355.5 L1076.5 355.5" stroke="#10106a" fill="none"/><circle cx="981.5" cy="355.5" r="2.4" fill="#10106a"/><circle cx="918.5" cy="355.5" r="2.4" fill="#10106a"/><circle cx="1041.5" cy="355.5" r="2.4" fill="#10106a"/><text x="950.3" y="338.5" text-anchor="middle">R44</text><text x="950.3" y="348.5" text-anchor="middle">33</text><path d="M918.5 321.5 L918.5 392.5" stroke="#10106a" fill="none"/><rect x="1037.5" y="83.5" width="8" height="9.0" fill="#fff" stroke="#000"/><path d="M1041.5 92.5 L1041.5 226.5" stroke="#10106a" fill="none"/><text x="1058.3" y="84.5" text-anchor="middle">10k</text><path d="M1034 226.5H1049L1041.5 235Z" fill="none" stroke="#c00000"/><path d="M1034 235H1049M1046 233L1053 227M1050 227H1053V230" stroke="#c00000" fill="none"/><text x="1065.8" y="233.0" text-anchor="middle">D1</text><path d="M1041.5 235.5 L1041.5 392.5" stroke="#10106a" fill="none"/><circle cx="1041.5" cy="256.5" r="2.4" fill="#10106a"/><path d="M1041.5 256.5 L1096.5 256.5 L1096.5 178.5" stroke="#10106a" fill="none"/><rect x="1035.5" y="283.5" width="10" height="12" fill="#fff" stroke="#e00000" stroke-width="2"/><text x="1040.5" y="293" text-anchor="middle" font-size="9">A</text><path d="M1082.5 160.5V178.5M1086.6 158V164.5M1086.6 166.5V173M1086.6 174.5V181.5" stroke="#000" stroke-width="1.3"/><path d="M1086.5 160.5 L1096.5 160.5 L1096.5 108.5" stroke="#10106a" fill="none"/><path d="M1086.5 178.5 L1096.5 178.5" stroke="#000" fill="none"/><path d="M1086.5 169.5 L1096.5 169.5 L1096.5 178.5" stroke="#000" fill="none"/><path d="M1087.5 169.5L1093 166.5V172.5Z" fill="#000"/><circle cx="1096.5" cy="178.5" r="2.4" fill="#000"/><text x="1067.3" y="173.0" text-anchor="middle">Q32</text><text x="1070.3" y="193.5" text-anchor="middle">IRFP240</text><rect x="1092.5" y="84.5" width="8" height="24.0" fill="#fff" stroke="#000"/><text x="1111.3" y="94.0" text-anchor="middle">R5</text><text x="1111.3" y="103.5" text-anchor="middle">1m</text><path d="M1131.5 83.5 L1131.5 290.5" stroke="#10106a" fill="none"/><path d="M1131.5 297.5 L1131.5 392.5" stroke="#10106a" fill="none"/><circle cx="1131.5" cy="355.5" r="2.4" fill="#10106a"/><path d="M1124.5 290.5H1139.5" stroke="#000" stroke-width="1.2"/><path d="M1124.5 300Q1132 293 1139.5 300" stroke="#000" fill="none" stroke-width="1.2"/><path d="M1133 285H1137M1135 283V287" stroke="#000" stroke-width="0.8"/><text x="1105.8" y="285.0" text-anchor="middle">C10</text><text x="1104.3" y="297.5" text-anchor="middle">10mF</text><text x="1104.3" y="308.0" text-anchor="middle">50V</text><path d="M1061.6 332.7H1110.6L1095.5 347.5H1076.3Z" fill="#fff" stroke="#000"/><rect x="1076.3" y="347.5" width="19.2" height="14" fill="#fff" stroke="#000"/><text x="1086" y="358.5" text-anchor="middle" font-size="10">8</text><path d="M1095.5 355.5 L1131.5 355.5" stroke="#10106a" fill="none"/><text x="1070.8" y="383.0" text-anchor="middle">R60</text><text x="1070.3" y="392.5" text-anchor="middle">10</text><text x="1107.3" y="379.0" text-anchor="middle">C15</text><text x="1108.8" y="388.5" text-anchor="middle">47nF</text><text x="669.3" y="81.5" text-anchor="middle">Q17</text><text x="808.3" y="81.5" text-anchor="middle">Q20</text><text x="898.3" y="81.5" text-anchor="middle">Q28</text><text x="1000.3" y="81.5" text-anchor="middle">Q30</text></g></svg>
<div class="a" style="left:1261px;top:83px;width:17px;height:309px;background:#FBFBF8;border-left:1px solid #F0F0EA"></div>
<div class="a" style="left:1262px;top:84px;width:16px;height:16px;background:linear-gradient(135deg,#DCE6FC,#C1D3FB 60%,#B4C8F6);border:1px solid #B8CBF2;border-radius:2px"></div>
<div class="a" style="left:1262px;top:376px;width:16px;height:16px;background:linear-gradient(135deg,#DCE6FC,#C1D3FB 60%,#B4C8F6);border:1px solid #B8CBF2;border-radius:2px"></div>
<div class="a" style="left:1263px;top:110px;width:14px;height:21px;background:linear-gradient(90deg,#CAD8FB,#BCCFFA);border:1px solid #A8BFF2;border-radius:2px"></div>
<svg class="a" style="left:1262px;top:84px" width="16" height="309"><path d="M4.5 10L8 6.5L11.5 10" stroke="#4D6185" stroke-width="2" fill="none"/><path d="M4.5 33.5H11.5M4.5 36.5H11.5M4.5 39.5H11.5" stroke="#EEF3FE" /><path d="M4.5 297L8 300.5L11.5 297" stroke="#4D6185" stroke-width="2" fill="none"/></svg>
<div class="a" style="left:176px;top:392px;width:1086px;height:17px;background:#FBFBF8;border-top:1px solid #F0F0EA"></div>
<div class="a" style="left:177px;top:393px;width:16px;height:16px;background:linear-gradient(135deg,#DCE6FC,#C1D3FB 60%,#B4C8F6);border:1px solid #B8CBF2;border-radius:2px"></div>
<div class="a" style="left:1244px;top:393px;width:16px;height:16px;background:linear-gradient(135deg,#DCE6FC,#C1D3FB 60%,#B4C8F6);border:1px solid #B8CBF2;border-radius:2px"></div>
<div class="a" style="left:193px;top:393px;width:327px;height:16px;background:linear-gradient(#CAD8FB,#BCCFFA);border:1px solid #A8BFF2;border-radius:2px"></div>
<svg class="a" style="left:177px;top:393px" width="1084" height="16"><path d="M10 4.5L6.5 8L10 11.5" stroke="#4D6185" stroke-width="2" fill="none"/><path d="M176 4V12M179 4V12M182 4V12" stroke="#EEF3FE"/><path d="M1073 4.5L1076.5 8L1073 11.5" stroke="#4D6185" stroke-width="2" fill="none"/></svg>
<div class="a" style="left:1262px;top:393px;width:16px;height:16px;background:#ECE9D8"></div>
<div class="a" style="left:175px;top:414px;width:1104px;height:1px;background:#ACA899"></div>
<div class="a" style="left:175px;top:415px;width:1104px;height:1px;background:#fff"></div>
<div class="a" style="left:175px;top:416px;width:1104px;height:558px;background:#ECE9D8;border-left:1px solid #716F64"></div>
<div class="a" style="left:191px;top:417px;width:1088px;height:531px;background:#DCDCDC"></div>
<div class="a" style="left:190px;top:417px;width:1px;height:532px;background:#000"></div>
<div class="a" style="left:176px;top:948px;width:15px;height:1px;background:#000"></div>
<div class="a" style="left:176px;top:682px;width:15px;height:1px;background:#000"></div>
<svg class="a" style="left:178px;top:808px" width="12" height="18"><path d="M2 1L11 9L2 17Z" fill="#000"/></svg>
<svg class="a" style="left:0;top:0" width="1280" height="1024" viewBox="0 0 1280 1024"><path d="M335 436.5H1249" stroke="#8A8A8A" stroke-width="1"/><path d="M336 441.5H343" stroke="#8A8A8A"/><path d="M336 446.5H343" stroke="#8A8A8A"/><path d="M336 452.5H343" stroke="#8A8A8A"/><path d="M336 457.5H343" stroke="#8A8A8A"/><path d="M335 463.5H1249" stroke="#8A8A8A" stroke-width="1"/><path d="M336 468.5H343" stroke="#8A8A8A"/><path d="M336 474.5H343" stroke="#8A8A8A"/><path d="M336 479.5H343" stroke="#8A8A8A"/><path d="M336 485.5H343" stroke="#8A8A8A"/><path d="M335 491.5H1249" stroke="#8A8A8A" stroke-width="1"/><path d="M336 496.5H343" stroke="#8A8A8A"/><path d="M336 502.5H343" stroke="#8A8A8A"/><path d="M336 507.5H343" stroke="#8A8A8A"/><path d="M336 513.5H343" stroke="#8A8A8A"/><path d="M335 519.5H1249" stroke="#8A8A8A" stroke-width="1"/><path d="M336 524.5H343" stroke="#8A8A8A"/><path d="M336 530.5H343" stroke="#8A8A8A"/><path d="M336 535.5H343" stroke="#8A8A8A"/><path d="M336 541.5H343" stroke="#8A8A8A"/><path d="M335 547.5H1249" stroke="#8A8A8A" stroke-width="1"/><path d="M336 552.5H343" stroke="#8A8A8A"/><path d="M336 557.5H343" stroke="#8A8A8A"/><path d="M336 563.5H343" stroke="#8A8A8A"/><path d="M336 568.5H343" stroke="#8A8A8A"/><path d="M335 574.5H1249" stroke="#8A8A8A" stroke-width="1"/><path d="M336 579.5H343" stroke="#8A8A8A"/><path d="M336 585.5H343" stroke="#8A8A8A"/><path d="M336 590.5H343" stroke="#8A8A8A"/><path d="M336 596.5H343" stroke="#8A8A8A"/><path d="M335 602.5H1249" stroke="#8A8A8A" stroke-width="1"/><path d="M336 607.5H343" stroke="#8A8A8A"/><path d="M336 613.5H343" stroke="#8A8A8A"/><path d="M336 618.5H343" stroke="#8A8A8A"/><path d="M336 624.5H343" stroke="#8A8A8A"/><path d="M335 630.5H1249" stroke="#8A8A8A" stroke-width="1"/><path d="M336 635.5H343" stroke="#8A8A8A"/><path d="M336 641.5H343" stroke="#8A8A8A"/><path d="M336 646.5H343" stroke="#8A8A8A"/><path d="M336 652.5H343" stroke="#8A8A8A"/><path d="M335 658.5H1249" stroke="#8A8A8A" stroke-width="1"/><path d="M335.5 436V663.5" stroke="#8A8A8A"/><path d="M390.5 650.5V658.5" stroke="#8A8A8A"/><path d="M422.5 650.5V658.5" stroke="#8A8A8A"/><path d="M445.5 650.5V658.5" stroke="#8A8A8A"/><path d="M463.5 650.5V658.5" stroke="#8A8A8A"/><path d="M477.5 650.5V658.5" stroke="#8A8A8A"/><path d="M489.5 650.5V658.5" stroke="#8A8A8A"/><path d="M500.5 650.5V658.5" stroke="#8A8A8A"/><path d="M509.5 650.5V658.5" stroke="#8A8A8A"/><path d="M518.5 436V663.5" stroke="#8A8A8A"/><path d="M573.5 650.5V658.5" stroke="#8A8A8A"/><path d="M605.5 650.5V658.5" stroke="#8A8A8A"/><path d="M628.5 650.5V658.5" stroke="#8A8A8A"/><path d="M645.5 650.5V658.5" stroke="#8A8A8A"/><path d="M660.5 650.5V658.5" stroke="#8A8A8A"/><path d="M672.5 650.5V658.5" stroke="#8A8A8A"/><path d="M683.5 650.5V658.5" stroke="#8A8A8A"/><path d="M692.5 650.5V658.5" stroke="#8A8A8A"/><path d="M700.5 436V663.5" stroke="#8A8A8A"/><path d="M755.5 650.5V658.5" stroke="#8A8A8A"/><path d="M787.5 650.5V658.5" stroke="#8A8A8A"/><path d="M810.5 650.5V658.5" stroke="#8A8A8A"/><path d="M828.5 650.5V658.5" stroke="#8A8A8A"/><path d="M842.5 650.5V658.5" stroke="#8A8A8A"/><path d="M855.5 650.5V658.5" stroke="#8A8A8A"/><path d="M865.5 650.5V658.5" stroke="#8A8A8A"/><path d="M874.5 650.5V658.5" stroke="#8A8A8A"/><path d="M883.5 436V663.5" stroke="#8A8A8A"/><path d="M938.5 650.5V658.5" stroke="#8A8A8A"/><path d="M970.5 650.5V658.5" stroke="#8A8A8A"/><path d="M993.5 650.5V658.5" stroke="#8A8A8A"/><path d="M1010.5 650.5V658.5" stroke="#8A8A8A"/><path d="M1025.5 650.5V658.5" stroke="#8A8A8A"/><path d="M1037.5 650.5V658.5" stroke="#8A8A8A"/><path d="M1048.5 650.5V658.5" stroke="#8A8A8A"/><path d="M1057.5 650.5V658.5" stroke="#8A8A8A"/><path d="M1065.5 436V663.5" stroke="#8A8A8A"/><path d="M1120.5 650.5V658.5" stroke="#8A8A8A"/><path d="M1153.5 650.5V658.5" stroke="#8A8A8A"/><path d="M1175.5 650.5V658.5" stroke="#8A8A8A"/><path d="M1193.5 650.5V658.5" stroke="#8A8A8A"/><path d="M1207.5 650.5V658.5" stroke="#8A8A8A"/><path d="M1220.5 650.5V658.5" stroke="#8A8A8A"/><path d="M1230.5 650.5V658.5" stroke="#8A8A8A"/><path d="M1240.5 650.5V658.5" stroke="#8A8A8A"/><path d="M1248.5 436V663.5" stroke="#8A8A8A"/><text x="328" y="440" text-anchor="end" font-family="Liberation Sans" font-size="11" fill="#000">20.00 dB</text><text x="328" y="495" text-anchor="end" font-family="Liberation Sans" font-size="11" fill="#000">0.000 dB</text><text x="328" y="551" text-anchor="end" font-family="Liberation Sans" font-size="11" fill="#000">-20.00 dB</text><text x="328" y="606" text-anchor="end" font-family="Liberation Sans" font-size="11" fill="#000">-40.00 dB</text><text x="328" y="662" text-anchor="end" font-family="Liberation Sans" font-size="11" fill="#000">-60.00 dB</text><text x="337" y="675" text-anchor="middle" font-family="Liberation Sans" font-size="11" fill="#000">100.0 Hz</text><text x="520" y="675" text-anchor="middle" font-family="Liberation Sans" font-size="11" fill="#000">1.000kHz</text><text x="702" y="675" text-anchor="middle" font-family="Liberation Sans" font-size="11" fill="#000">10.00kHz</text><text x="885" y="675" text-anchor="middle" font-family="Liberation Sans" font-size="11" fill="#000">100.0kHz</text><text x="1067" y="675" text-anchor="middle" font-family="Liberation Sans" font-size="11" fill="#000">1.000MHz</text><text x="1250" y="675" text-anchor="middle" font-family="Liberation Sans" font-size="11" fill="#000">10.00MHz</text><path d="M335 701.5H1249" stroke="#8A8A8A" stroke-width="1"/><path d="M336 706.5H343" stroke="#8A8A8A"/><path d="M336 712.5H343" stroke="#8A8A8A"/><path d="M336 717.5H343" stroke="#8A8A8A"/><path d="M336 723.5H343" stroke="#8A8A8A"/><path d="M335 729.5H1249" stroke="#8A8A8A" stroke-width="1"/><path d="M336 734.5H343" stroke="#8A8A8A"/><path d="M336 739.5H343" stroke="#8A8A8A"/><path d="M336 745.5H343" stroke="#8A8A8A"/><path d="M336 750.5H343" stroke="#8A8A8A"/><path d="M335 756.5H1249" stroke="#8A8A8A" stroke-width="1"/><path d="M336 761.5H343" stroke="#8A8A8A"/><path d="M336 767.5H343" stroke="#8A8A8A"/><path d="M336 772.5H343" stroke="#8A8A8A"/><path d="M336 778.5H343" stroke="#8A8A8A"/><path d="M335 784.5H1249" stroke="#8A8A8A" stroke-width="1"/><path d="M336 789.5H343" stroke="#8A8A8A"/><path d="M336 795.5H343" stroke="#8A8A8A"/><path d="M336 800.5H343" stroke="#8A8A8A"/><path d="M336 806.5H343" stroke="#8A8A8A"/><path d="M335 812.5H1249" stroke="#8A8A8A" stroke-width="1"/><path d="M336 817.5H343" stroke="#8A8A8A"/><path d="M336 823.5H343" stroke="#8A8A8A"/><path d="M336 828.5H343" stroke="#8A8A8A"/><path d="M336 834.5H343" stroke="#8A8A8A"/><path d="M335 840.5H1249" stroke="#8A8A8A" stroke-width="1"/><path d="M336 845.5H343" stroke="#8A8A8A"/><path d="M336 851.5H343" stroke="#8A8A8A"/><path d="M336 856.5H343" stroke="#8A8A8A"/><path d="M336 862.5H343" stroke="#8A8A8A"/><path d="M335 868.5H1249" stroke="#8A8A8A" stroke-width="1"/><path d="M336 873.5H343" stroke="#8A8A8A"/><path d="M336 879.5H343" stroke="#8A8A8A"/><path d="M336 884.5H343" stroke="#8A8A8A"/><path d="M336 890.5H343" stroke="#8A8A8A"/><path d="M335 896.5H1249" stroke="#8A8A8A" stroke-width="1"/><path d="M336 901.5H343" stroke="#8A8A8A"/><path d="M336 906.5H343" stroke="#8A8A8A"/><path d="M336 912.5H343" stroke="#8A8A8A"/><path d="M336 917.5H343" stroke="#8A8A8A"/><path d="M335 923.5H1249" stroke="#8A8A8A" stroke-width="1"/><path d="M335.5 701V928.5" stroke="#8A8A8A"/><path d="M390.5 915.5V923.5" stroke="#8A8A8A"/><path d="M422.5 915.5V923.5" stroke="#8A8A8A"/><path d="M445.5 915.5V923.5" stroke="#8A8A8A"/><path d="M463.5 915.5V923.5" stroke="#8A8A8A"/><path d="M477.5 915.5V923.5" stroke="#8A8A8A"/><path d="M489.5 915.5V923.5" stroke="#8A8A8A"/><path d="M500.5 915.5V923.5" stroke="#8A8A8A"/><path d="M509.5 915.5V923.5" stroke="#8A8A8A"/><path d="M518.5 701V928.5" stroke="#8A8A8A"/><path d="M573.5 915.5V923.5" stroke="#8A8A8A"/><path d="M605.5 915.5V923.5" stroke="#8A8A8A"/><path d="M628.5 915.5V923.5" stroke="#8A8A8A"/><path d="M645.5 915.5V923.5" stroke="#8A8A8A"/><path d="M660.5 915.5V923.5" stroke="#8A8A8A"/><path d="M672.5 915.5V923.5" stroke="#8A8A8A"/><path d="M683.5 915.5V923.5" stroke="#8A8A8A"/><path d="M692.5 915.5V923.5" stroke="#8A8A8A"/><path d="M700.5 701V928.5" stroke="#8A8A8A"/><path d="M755.5 915.5V923.5" stroke="#8A8A8A"/><path d="M787.5 915.5V923.5" stroke="#8A8A8A"/><path d="M810.5 915.5V923.5" stroke="#8A8A8A"/><path d="M828.5 915.5V923.5" stroke="#8A8A8A"/><path d="M842.5 915.5V923.5" stroke="#8A8A8A"/><path d="M855.5 915.5V923.5" stroke="#8A8A8A"/><path d="M865.5 915.5V923.5" stroke="#8A8A8A"/><path d="M874.5 915.5V923.5" stroke="#8A8A8A"/><path d="M883.5 701V928.5" stroke="#8A8A8A"/><path d="M938.5 915.5V923.5" stroke="#8A8A8A"/><path d="M970.5 915.5V923.5" stroke="#8A8A8A"/><path d="M993.5 915.5V923.5" stroke="#8A8A8A"/><path d="M1010.5 915.5V923.5" stroke="#8A8A8A"/><path d="M1025.5 915.5V923.5" stroke="#8A8A8A"/><path d="M1037.5 915.5V923.5" stroke="#8A8A8A"/><path d="M1048.5 915.5V923.5" stroke="#8A8A8A"/><path d="M1057.5 915.5V923.5" stroke="#8A8A8A"/><path d="M1065.5 701V928.5" stroke="#8A8A8A"/><path d="M1120.5 915.5V923.5" stroke="#8A8A8A"/><path d="M1153.5 915.5V923.5" stroke="#8A8A8A"/><path d="M1175.5 915.5V923.5" stroke="#8A8A8A"/><path d="M1193.5 915.5V923.5" stroke="#8A8A8A"/><path d="M1207.5 915.5V923.5" stroke="#8A8A8A"/><path d="M1220.5 915.5V923.5" stroke="#8A8A8A"/><path d="M1230.5 915.5V923.5" stroke="#8A8A8A"/><path d="M1240.5 915.5V923.5" stroke="#8A8A8A"/><path d="M1248.5 701V928.5" stroke="#8A8A8A"/><text x="328" y="705" text-anchor="end" font-family="Liberation Sans" font-size="11" fill="#000">0.000 Deg</text><text x="328" y="760" text-anchor="end" font-family="Liberation Sans" font-size="11" fill="#000">-100.0 Deg</text><text x="328" y="816" text-anchor="end" font-family="Liberation Sans" font-size="11" fill="#000">-200.0 Deg</text><text x="328" y="872" text-anchor="end" font-family="Liberation Sans" font-size="11" fill="#000">-300.0 Deg</text><text x="328" y="927" text-anchor="end" font-family="Liberation Sans" font-size="11" fill="#000">-400.0 Deg</text><text x="337" y="940" text-anchor="middle" font-family="Liberation Sans" font-size="11" fill="#000">100.0 Hz</text><text x="520" y="940" text-anchor="middle" font-family="Liberation Sans" font-size="11" fill="#000">1.000kHz</text><text x="702" y="940" text-anchor="middle" font-family="Liberation Sans" font-size="11" fill="#000">10.00kHz</text><text x="885" y="940" text-anchor="middle" font-family="Liberation Sans" font-size="11" fill="#000">100.0kHz</text><text x="1067" y="940" text-anchor="middle" font-family="Liberation Sans" font-size="11" fill="#000">1.000MHz</text><text x="1250" y="940" text-anchor="middle" font-family="Liberation Sans" font-size="11" fill="#000">10.00MHz</text><text x="200" y="446" font-family="Liberation Sans" font-size="11" fill="#E02020">A: q32_1</text><text x="200" y="711" font-family="Liberation Sans" font-size="11" fill="#E02020">A: q32_1</text><path d="M336 436.19 L338 436.19 L340 436.19 L342 436.19 L344 436.19 L346 436.19 L348 436.19 L350 436.19 L352 436.19 L354 436.19 L356 436.19 L358 436.19 L360 436.19 L362 436.19 L364 436.19 L366 436.19 L368 436.19 L370 436.19 L372 436.19 L374 436.19 L376 436.19 L378 436.19 L380 436.19 L382 436.19 L384 436.19 L386 436.19 L388 436.19 L390 436.19 L392 436.19 L394 436.19 L396 436.19 L398 436.19 L400 436.19 L402 436.19 L404 436.19 L406 436.19 L408 436.19 L410 436.19 L412 436.19 L414 436.19 L416 436.19 L418 436.19 L420 436.19 L422 436.19 L424 436.19 L426 436.19 L428 436.19 L430 436.19 L432 436.19 L434 436.19 L436 436.19 L438 436.19 L440 436.19 L442 436.19 L444 436.19 L446 436.19 L448 436.19 L450 436.19 L452 436.19 L454 436.19 L456 436.19 L458 436.19 L460 436.19 L462 436.19 L464 436.19 L466 436.19 L468 436.19 L470 436.19 L472 436.19 L474 436.19 L476 436.19 L478 436.19 L480 436.19 L482 436.19 L484 436.19 L486 436.19 L488 436.19 L490 436.19 L492 436.19 L494 436.19 L496 436.19 L498 436.19 L500 436.19 L502 436.19 L504 436.19 L506 436.19 L508 436.19 L510 436.19 L512 436.19 L514 436.19 L516 436.19 L518 436.19 L520 436.19 L522 436.19 L524 436.19 L526 436.19 L528 436.19 L530 436.19 L532 436.19 L534 436.19 L536 436.19 L538 436.19 L540 436.19 L542 436.19 L544 436.19 L546 436.19 L548 436.19 L550 436.19 L552 436.19 L554 436.19 L556 436.19 L558 436.19 L560 436.19 L562 436.19 L564 436.19 L566 436.19 L568 436.19 L570 436.19 L572 436.19 L574 436.19 L576 436.19 L578 436.19 L580 436.19 L582 436.19 L584 436.19 L586 436.19 L588 436.19 L590 436.19 L592 436.19 L594 436.19 L596 436.19 L598 436.19 L600 436.19 L602 436.19 L604 436.19 L606 436.19 L608 436.19 L610 436.19 L612 436.19 L614 436.19 L616 436.19 L618 436.19 L620 436.20 L622 436.20 L624 436.20 L626 436.20 L628 436.20 L630 436.20 L632 436.20 L634 436.20 L636 436.20 L638 436.20 L640 436.20 L642 436.20 L644 436.20 L646 436.20 L648 436.20 L650 436.20 L652 436.20 L654 436.20 L656 436.20 L658 436.20 L660 436.20 L662 436.20 L664 436.21 L666 436.21 L668 436.21 L670 436.21 L672 436.21 L674 436.21 L676 436.21 L678 436.21 L680 436.21 L682 436.21 L684 436.22 L686 436.22 L688 436.22 L690 436.22 L692 436.22 L694 436.22 L696 436.23 L698 436.23 L700 436.23 L702 436.23 L704 436.23 L706 436.24 L708 436.24 L710 436.24 L712 436.24 L714 436.25 L716 436.25 L718 436.25 L720 436.25 L722 436.26 L724 436.26 L726 436.26 L728 436.27 L730 436.27 L732 436.28 L734 436.28 L736 436.29 L738 436.29 L740 436.30 L742 436.30 L744 436.31 L746 436.31 L748 436.32 L750 436.33 L752 436.33 L754 436.34 L756 436.35 L758 436.36 L760 436.37 L762 436.37 L764 436.38 L766 436.39 L768 436.40 L770 436.42 L772 436.43 L774 436.44 L776 436.45 L778 436.47 L780 436.48 L782 436.49 L784 436.51 L786 436.53 L788 436.54 L790 436.56 L792 436.58 L794 436.60 L796 436.62 L798 436.64 L800 436.67 L802 436.69 L804 436.72 L806 436.74 L808 436.77 L810 436.80 L812 436.83 L814 436.86 L816 436.90 L818 436.93 L820 436.97 L822 437.01 L824 437.05 L826 437.09 L828 437.14 L830 437.18 L832 437.23 L834 437.28 L836 437.34 L838 437.39 L840 437.45 L842 437.52 L844 437.58 L846 437.65 L848 437.72 L850 437.79 L852 437.87 L854 437.95 L856 438.04 L858 438.13 L860 438.22 L862 438.32 L864 438.42 L866 438.52 L868 438.63 L870 438.74 L872 438.86 L874 438.99 L876 439.12 L878 439.25 L880 439.39 L882 439.54 L884 439.69 L886 439.84 L888 440.01 L890 440.18 L892 440.35 L894 440.53 L896 440.72 L898 440.92 L900 441.12 L902 441.33 L904 441.54 L906 441.77 L908 442.00 L910 442.24 L912 442.48 L914 442.74 L916 443.00 L918 443.27 L920 443.54 L922 443.83 L924 444.12 L926 444.42 L928 444.73 L930 445.05 L932 445.38 L934 445.71 L936 446.05 L938 446.40 L940 446.76 L942 447.13 L944 447.50 L946 447.88 L948 448.27 L950 448.67 L952 449.08 L954 449.49 L956 449.91 L958 450.34 L960 450.78 L962 451.22 L964 451.68 L966 452.14 L968 452.60 L970 453.08 L972 453.56 L974 454.05 L976 454.54 L978 455.04 L980 455.55 L982 456.07 L984 456.59 L986 457.12 L988 457.65 L990 458.20 L992 458.75 L994 459.30 L996 459.86 L998 460.43 L1000 461.00 L1002 461.58 L1004 462.17 L1006 462.76 L1008 463.36 L1010 463.96 L1012 464.58 L1014 465.19 L1016 465.82 L1018 466.45 L1020 467.08 L1022 467.73 L1024 468.38 L1026 469.03 L1028 469.70 L1030 470.37 L1032 471.04 L1034 471.73 L1036 472.42 L1038 473.12 L1040 473.82 L1042 474.54 L1044 475.26 L1046 475.99 L1048 476.73 L1050 477.47 L1052 478.23 L1054 478.99 L1056 479.76 L1058 480.55 L1060 481.34 L1062 482.14 L1064 482.95 L1066 483.77 L1068 484.60 L1070 485.45 L1072 486.30 L1074 487.17 L1076 488.04 L1078 488.93 L1080 489.83 L1082 490.75 L1084 491.67 L1086 492.61 L1088 493.57 L1090 494.53 L1092 495.51 L1094 496.51 L1096 497.52 L1098 498.54 L1100 499.58 L1102 500.63 L1104 501.70 L1106 502.79 L1108 503.89 L1110 505.00 L1112 506.14 L1114 507.29 L1116 508.45 L1118 509.64 L1120 510.84 L1122 512.06 L1124 513.29 L1126 514.54 L1128 515.81 L1130 517.10 L1132 518.41 L1134 519.73 L1136 521.07 L1138 522.43 L1140 523.81 L1142 525.20 L1144 526.62 L1146 528.05 L1148 529.50 L1150 530.97 L1152 532.45 L1154 533.96 L1156 535.48 L1158 537.02 L1160 538.58 L1162 540.15 L1164 541.74 L1166 543.35 L1168 544.98 L1170 546.63 L1172 548.29 L1174 549.97 L1176 551.66 L1178 553.38 L1180 555.11 L1182 556.85 L1184 558.62 L1186 560.40 L1188 562.19 L1190 564.00 L1192 565.83 L1194 567.67 L1196 569.53 L1198 571.40 L1200 573.29 L1202 575.20 L1204 577.11 L1206 579.05 L1208 580.99 L1210 582.95 L1212 584.93 L1214 586.92 L1216 588.92 L1218 590.93 L1220 592.96 L1222 595.00 L1224 597.06 L1226 599.12 L1228 601.20 L1230 603.29 L1232 605.39 L1234 607.51 L1236 609.63 L1238 611.76 L1240 613.91 L1242 616.07 L1244 618.23 L1246 620.41 L1248 622.59" stroke="#E00000" stroke-width="2.2" fill="none"/><path d="M614 701.87 L616 701.89 L618 701.90 L620 701.92 L622 701.94 L624 701.96 L626 701.98 L628 702.00 L630 702.02 L632 702.04 L634 702.07 L636 702.09 L638 702.11 L640 702.14 L642 702.16 L644 702.19 L646 702.21 L648 702.24 L650 702.27 L652 702.29 L654 702.32 L656 702.35 L658 702.38 L660 702.41 L662 702.44 L664 702.48 L666 702.51 L668 702.54 L670 702.58 L672 702.61 L674 702.65 L676 702.69 L678 702.73 L680 702.77 L682 702.81 L684 702.85 L686 702.89 L688 702.93 L690 702.98 L692 703.02 L694 703.07 L696 703.12 L698 703.17 L700 703.22 L702 703.27 L704 703.33 L706 703.38 L708 703.44 L710 703.49 L712 703.55 L714 703.61 L716 703.68 L718 703.74 L720 703.80 L722 703.87 L724 703.94 L726 704.01 L728 704.08 L730 704.16 L732 704.23 L734 704.31 L736 704.39 L738 704.47 L740 704.55 L742 704.64 L744 704.73 L746 704.82 L748 704.91 L750 705.01 L752 705.10 L754 705.20 L756 705.30 L758 705.41 L760 705.52 L762 705.63 L764 705.74 L766 705.85 L768 705.97 L770 706.09 L772 706.22 L774 706.35 L776 706.48 L778 706.61 L780 706.75 L782 706.89 L784 707.03 L786 707.18 L788 707.33 L790 707.49 L792 707.65 L794 707.81 L796 707.97 L798 708.14 L800 708.32 L802 708.50 L804 708.68 L806 708.87 L808 709.06 L810 709.26 L812 709.46 L814 709.66 L816 709.88 L818 710.09 L820 710.31 L822 710.54 L824 710.77 L826 711.01 L828 711.25 L830 711.50 L832 711.75 L834 712.01 L836 712.27 L838 712.54 L840 712.82 L842 713.10 L844 713.39 L846 713.68 L848 713.98 L850 714.29 L852 714.60 L854 714.93 L856 715.25 L858 715.59 L860 715.93 L862 716.27 L864 716.63 L866 716.99 L868 717.35 L870 717.73 L872 718.11 L874 718.50 L876 718.89 L878 719.29 L880 719.70 L882 720.12 L884 720.54 L886 720.97 L888 721.41 L890 721.85 L892 722.30 L894 722.76 L896 723.22 L898 723.69 L900 724.17 L902 724.66 L904 725.14 L906 725.64 L908 726.14 L910 726.65 L912 727.17 L914 727.69 L916 728.21 L918 728.74 L920 729.28 L922 729.82 L924 730.37 L926 730.92 L928 731.47 L930 732.03 L932 732.60 L934 733.17 L936 733.74 L938 734.32 L940 734.90 L942 735.48 L944 736.07 L946 736.66 L948 737.26 L950 737.86 L952 738.46 L954 739.06 L956 739.67 L958 740.28 L960 740.89 L962 741.50 L964 742.12 L966 742.74 L968 743.36 L970 743.99 L972 744.62 L974 745.25 L976 745.88 L978 746.51 L980 747.15 L982 747.79 L984 748.43 L986 749.08 L988 749.73 L990 750.38 L992 751.04 L994 751.69 L996 752.36 L998 753.02 L1000 753.69 L1002 754.36 L1004 755.04 L1006 755.72 L1008 756.41 L1010 757.10 L1012 757.79 L1014 758.50 L1016 759.20 L1018 759.91 L1020 760.63 L1022 761.35 L1024 762.08 L1026 762.82 L1028 763.56 L1030 764.31 L1032 765.07 L1034 765.83 L1036 766.60 L1038 767.38 L1040 768.17 L1042 768.96 L1044 769.77 L1046 770.58 L1048 771.40 L1050 772.23 L1052 773.07 L1054 773.92 L1056 774.78 L1058 775.65 L1060 776.53 L1062 777.42 L1064 778.32 L1066 779.23 L1068 780.15 L1070 781.08 L1072 782.02 L1074 782.98 L1076 783.94 L1078 784.92 L1080 785.90 L1082 786.90 L1084 787.91 L1086 788.93 L1088 789.96 L1090 791.00 L1092 792.05 L1094 793.11 L1096 794.19 L1098 795.27 L1100 796.36 L1102 797.47 L1104 798.58 L1106 799.71 L1108 800.84 L1110 801.99 L1112 803.14 L1114 804.30 L1116 805.47 L1118 806.65 L1120 807.83 L1122 809.02 L1124 810.22 L1126 811.43 L1128 812.64 L1130 813.86 L1132 815.09 L1134 816.31 L1136 817.55 L1138 818.79 L1140 820.03 L1142 821.27 L1144 822.52 L1146 823.77 L1148 825.02 L1150 826.27 L1152 827.52 L1154 828.77 L1156 830.02 L1158 831.27 L1160 832.52 L1162 833.77 L1164 835.01 L1166 836.25 L1168 837.49 L1170 838.72 L1172 839.95 L1174 841.17 L1176 842.38 L1178 843.59 L1180 844.80 L1182 845.99 L1184 847.18 L1186 848.36 L1188 849.54 L1190 850.70 L1192 851.85 L1194 853.00 L1196 854.14 L1198 855.26 L1200 856.38 L1202 857.48 L1204 858.58 L1206 859.66 L1208 860.74 L1210 861.80 L1212 862.85 L1214 863.89 L1216 864.92 L1218 865.94 L1220 866.95 L1222 867.94 L1224 868.93 L1226 869.90 L1228 870.86 L1230 871.81 L1232 872.75 L1234 873.68 L1236 874.60 L1238 875.50 L1240 876.40 L1242 877.28 L1244 878.16 L1246 879.02 L1248 879.88" stroke="#E00000" stroke-width="2.2" fill="none"/><path d="M336 491.5H1121M1084.5 459V701" stroke="#E00000" stroke-width="1"/><path d="M336 701.5H1248M336 788.5H1248M370.5 701V923M1084.5 701V923" stroke="#E00000" stroke-width="1" stroke-dasharray="3 3"/><path d="M365.0 685.5H376.0V696L370.5 701L365.0 696Z" fill="none" stroke="#E00000"/><text x="370.5" y="696" text-anchor="middle" font-family="Liberation Sans" font-size="10" fill="#E00000">1</text><path d="M1079.0 685.5H1090.0V696L1084.5 701L1079.0 696Z" fill="none" stroke="#E00000"/><text x="1084.5" y="696" text-anchor="middle" font-family="Liberation Sans" font-size="10" fill="#E00000">2</text></svg>
<svg class="a" style="left:0;top:0" width="1280" height="1024" viewBox="0 0 1280 1024">
<path d="M176 955.5H1279" stroke="#000"/>
<path d="M333.5 955.5L330 969.5H425L428.5 955.5" fill="#fff" stroke="#000"/>
<path d="M252 955.5L249 969.5H329.5L333.5 955.5" fill="#fff" stroke="#000"/>
<path d="M184 955.5L189.5 969.5H246.5L252 955.5" fill="#ECE9D8" stroke="#000"/>
<g font-family="Liberation Sans" font-size="11" fill="#000">
<text x="190" y="966.5" textLength="55.5" lengthAdjust="spacingAndGlyphs">AC Analysis</text>
<text x="254.5" y="966.5" textLength="72.5" lengthAdjust="spacingAndGlyphs">Operating Point</text>
<text x="337.5" y="966.5" textLength="84" lengthAdjust="spacingAndGlyphs">Transient Analysis</text>
</g></svg>
<div class="a" style="left:0px;top:973px;width:1280px;height:3px;background:#F4F2E8"></div>
<div class="a" style="left:0px;top:977px;width:1280px;height:1px;background:#ACA899"></div>
<div class="a" style="left:0px;top:978px;width:1280px;height:15px;background:#ECE9D8"></div>
<div class="a" style="left:0px;top:993px;width:1280px;height:1px;background:#fff"></div>
<div class="a" style="left:49px;top:978px;width:1px;height:15px;background:#fff"></div>
<div class="a" style="left:52px;top:977px;width:1px;height:16px;background:#ACA899"></div>
<div class="a" style="left:0px;top:994px;width:1280px;height:30px;background:linear-gradient(#3168D5 0%,#4993E6 8%,#2157D7 20%,#2663E0 60%,#2157D7 92%,#1941A5 100%)"></div>
<div class="a" style="left:0px;top:994px;width:97px;height:30px;background:linear-gradient(#3C9A3C 0%,#4AAE4A 15%,#379837 50%,#2E862E 85%,#22661F 100%);border-radius:0 10px 10px 0"></div>
<svg class="a" style="left:9px;top:1000px" width="22" height="20" viewBox="0 0 22 20">
<path d="M2 3Q5 1 10 3V9Q5 7 2 9Z" fill="#F04A1A"/><path d="M11 3Q16 5 20 3V9Q16 11 11 9Z" fill="#5CC03A"/>
<path d="M2 10Q5 8 10 10V16Q5 14 2 16Z" fill="#2A8AE8"/><path d="M11 10Q16 12 20 10V16Q16 18 11 16Z" fill="#F8C820"/>
</svg>
<div class="t" style="left:35px;top:1000px;color:#fff;font-size:18px;font-weight:bold;font-style:italic;text-shadow:1px 1px 1px #1a4a1a">Start</div>
<div class="a" style="left:108px;top:997px;width:160px;height:25px;background:linear-gradient(#1E4AB8,#2859CE);border-radius:3px;border:1px solid #1A3F9E"></div>
<div class="t" style="left:139px;top:1004px;color:#fff;font-size:11px;letter-spacing:-0.1px">CircuitMaker</div>
<div class="a" style="left:270px;top:997px;width:157px;height:25px;background:linear-gradient(#4C8DF5,#3A7BEE 20%,#3775EB 80%,#2F6AE0);border-radius:3px;border:1px solid #5A9AF8"></div>
<div class="t" style="left:297px;top:1004px;color:#fff;font-size:11px;letter-spacing:-0.1px">Total Commander 6.5...</div>
<div class="a" style="left:429px;top:997px;width:157px;height:25px;background:linear-gradient(#4C8DF5,#3A7BEE 20%,#3775EB 80%,#2F6AE0);border-radius:3px;border:1px solid #5A9AF8"></div>
<div class="t" style="left:457px;top:1004px;color:#fff;font-size:11px;letter-spacing:-0.1px">Microsoft Office Pictu...</div>
<svg class="a" style="left:119px;top:1001px" width="17" height="16" viewBox="0 0 18 17"><rect width="18" height="17" fill="#f4d0f4"/><rect x="1" y="1" width="16" height="15" fill="#fff"/><path d="M2 4H11M4 3V13M3 7H8M8 7V13" stroke="#555" stroke-width="1.3" fill="none"/><circle cx="14" cy="5" r="2.6" fill="#d01010"/><circle cx="14" cy="12" r="2.6" fill="#0020b0"/><circle cx="6" cy="13" r="2" fill="#109010"/></svg>
<svg class="a" style="left:278px;top:1001px" width="16" height="16" viewBox="0 0 16 16"><rect x="1" y="1" width="14" height="14" fill="#1a1a60"/><rect x="4" y="1" width="8" height="5" fill="#ddd"/><rect x="2" y="8" width="12" height="2" fill="#e02020"/><rect x="2" y="11" width="12" height="2" fill="#fff"/></svg>
<svg class="a" style="left:439px;top:1001px" width="16" height="16" viewBox="0 0 16 16"><rect x="0" y="0" width="16" height="16" fill="#c04040"/><rect x="2" y="2" width="12" height="12" fill="#fff"/><path d="M3 12L7 6L10 10L13 4V12Z" fill="#c04040"/></svg>
<div class="t" style="left:1098px;top:1004px;color:#fff;font-size:11px">HU</div>
<div class="a" style="left:1134px;top:994px;width:146px;height:30px;background:linear-gradient(#1C9EF0 0%,#1290E8 10%,#0F8AE2 50%,#0D7ED8 90%,#0A6CC4 100%);border-left:1px solid #0A4EA8"></div>
<svg class="a" style="left:1143px;top:1000px" width="92" height="20" viewBox="0 0 92 20">
<path d="M2 16L14 4L16 6L5 17Z" fill="#e03030"/><path d="M3 15L13 7" stroke="#30c030" stroke-width="2"/><path d="M2 17H16" stroke="#333" stroke-width="2"/>
<path d="M21 3L28 1L35 3V10Q35 16 28 19Q21 16 21 10Z" fill="#e02020" stroke="#fff"/><path d="M25.5 7.5L30.5 12.5M30.5 7.5L25.5 12.5" stroke="#fff" stroke-width="1.8"/>
<path d="M39 7H42L47 3V17L42 13H39Z" fill="#f08020"/><path d="M49 5Q52 10 49 15" stroke="#444" stroke-width="1.5" fill="none"/>
<circle cx="62" cy="9" r="6" fill="#999" stroke="#555"/><circle cx="62" cy="9" r="2.5" fill="#ddd"/>
<path d="M75 1H87V19H75Z" fill="#1040c0" rx="3"/><path d="M78 6L84 13L81 16V4L84 7L78 13" stroke="#e02020" stroke-width="1.2" fill="none"/>
</svg>
<div class="t" style="left:1240px;top:1004px;color:#fff;font-size:11px">18:33</div></body></html>
